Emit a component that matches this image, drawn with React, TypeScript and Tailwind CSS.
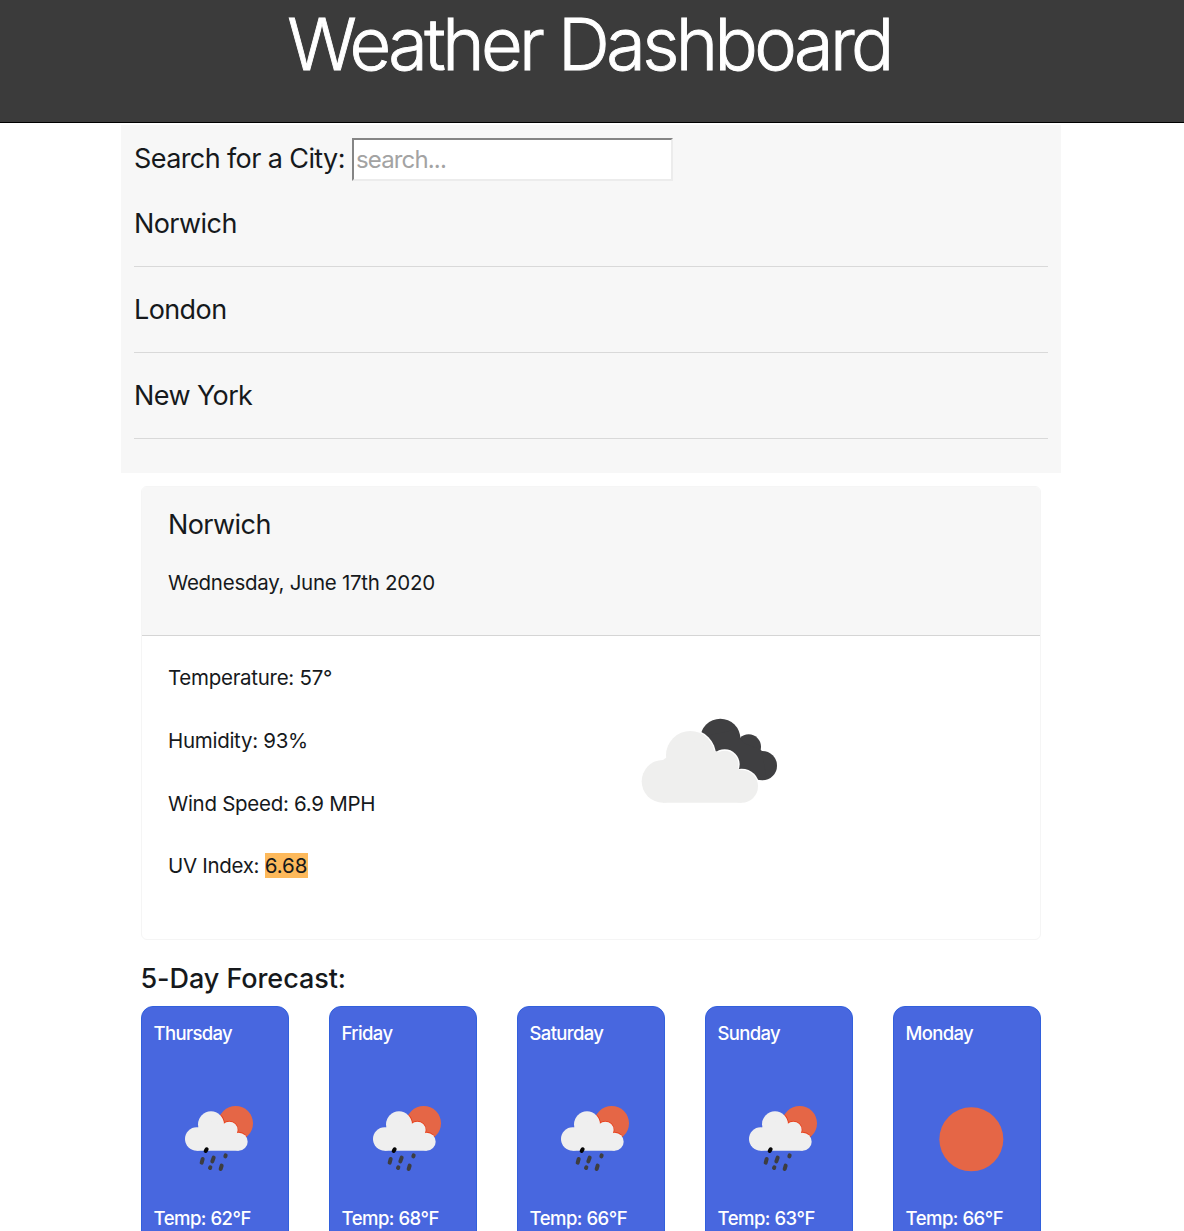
const cities = ["Norwich", "London", "New York"];

const days = [
  { name: "Thursday", temp: "62", rain: true },
  { name: "Friday", temp: "68", rain: true },
  { name: "Saturday", temp: "66", rain: true },
  { name: "Sunday", temp: "63", rain: true },
  { name: "Monday", temp: "66", rain: false },
];

function CloudsIcon() {
  return (
    <svg viewBox="0 0 540 360" className="h-[120px] w-[180px]">
      <g fill="#3f3f41">
        <circle cx="301" cy="116" r="60" />
        <circle cx="386" cy="140" r="37" />
        <circle cx="427" cy="197" r="44" />
        <path d="M250 110L340 90L359 113L372 130L424 150L440 235L410 240L300 200Z" />
      </g>
      <g fill="#fff">
        <circle cx="211" cy="166" r="77" />
        <circle cx="314" cy="193" r="45" />
        <circle cx="365" cy="259" r="53" />
      </g>
      <g fill="#efefee">
        <circle cx="129" cy="244" r="64" />
        <circle cx="211" cy="166" r="73" />
        <circle cx="314" cy="193" r="41" />
        <circle cx="365" cy="259" r="49" />
        <path d="M129 180L211 120L314 165L365 215V308H129Z" />
      </g>
    </svg>
  );
}

function CloudShape() {
  return (
    <>
      <circle cx="80" cy="132" r="35" />
      <circle cx="123" cy="88" r="39" />
      <circle cx="178" cy="105" r="25" />
      <circle cx="206" cy="140" r="27" />
      <path d="M80 100L123 80L178 95L206 120V167H80Z" />
    </>
  );
}

function RainIcon() {
  return (
    <svg viewBox="0 0 300 255" className="h-[85px] w-[100px]">
      <defs>
        <clipPath id="sunDisc">
          <circle cx="197" cy="85" r="52" />
        </clipPath>
      </defs>
      <circle cx="197" cy="85" r="52" fill="#e56646" />
      <g clipPath="url(#sunDisc)" fill="#e8401c" stroke="#e8401c" strokeWidth="5">
        <CloudShape />
      </g>
      <g fill="#efefef">
        <CloudShape />
      </g>
      <g stroke="#3d3d40" strokeWidth="12" strokeLinecap="round">
        <path d="M110 163L107 168" stroke="#050505" />
        <path d="M98 192L95 203M131 188L127 199M167 181L166 184M121 217L120 219M155 212L152 222" />
      </g>
    </svg>
  );
}

function SunIcon() {
  return (
    <svg viewBox="0 0 300 255" className="h-[85px] w-[100px]">
      <circle cx="148" cy="133" r="96" fill="#e56646" />
    </svg>
  );
}

export default function App() {
  return (
    <div className="h-[1231px] overflow-hidden bg-white font-['Inter',sans-serif] text-[#16191c]">
      <header className="flex h-[123px] justify-center border-b border-black bg-[#3b3b3b]">
        <h1 className="mt-[1px] mr-[6px] text-[72px] leading-[86px] font-light tracking-[-3.6px] whitespace-nowrap text-white [-webkit-text-stroke:0.9px_white]">
          <span>Weather Dashboard</span>
        </h1>
      </header>

      <section className="mt-[2px] ml-[121px] h-[348px] w-[940px] bg-[#f7f7f7] px-[13px] pt-[13px]">
        <div className="flex h-[43px] items-center">
          <label className="w-[218px] pb-[1px] text-[27px] tracking-[-0.6px] whitespace-nowrap">
            <span>Search for a City:</span>
          </label>
          <input
            placeholder="search..."
            className="h-[43px] w-[321px] rounded-none border-2 border-t-[#858585] border-r-[#ececec] border-b-[#ececec] border-l-[#858585] bg-white px-[2px] text-[24px] tracking-[-0.85px] outline-none placeholder:text-[#a3a3a3]"
          />
        </div>
        {cities.map((city) => (
          <div key={city} className="h-[86px] border-b border-[#d9d9d9] pt-[22px] text-[27px] leading-[42px] tracking-[-0.6px]">
            <span>{city}</span>
          </div>
        ))}
      </section>

      <section className="mt-[13px] ml-[141px] h-[454px] w-[900px] overflow-hidden rounded-[6px] border border-[#f5f5f5]">
        <div className="h-[149px] border-b border-[#d5d5d5] bg-[#f7f7f7] px-[26px] pt-[17px]">
          <h2 className="text-[27px] leading-[42px] tracking-[-0.6px]">
            <span>Norwich</span>
          </h2>
          <p className="mt-[21px] text-[20.5px] leading-8 tracking-[-0.27px]">
            <span>Wednesday, June 17th 2020</span>
          </p>
        </div>
        <div className="flex pt-[26px] pl-[26px]">
          <div className="flex w-[452px] flex-col gap-[30.8px] text-[20.5px] leading-8 tracking-[-0.28px]">
            <p><span>Temperature: 57°</span></p>
            <p><span>Humidity: 93%</span></p>
            <p><span>Wind Speed: 6.9 MPH</span></p>
            <p>
              <span className="tracking-[-0.3px]">UV Index: </span>
              <span className="bg-[#fdb95b] tracking-normal">6.68</span>
            </p>
          </div>
          <div className="mt-[38px]">
            <CloudsIcon />
          </div>
        </div>
      </section>

      <h2 className="mt-[18px] ml-[140.5px] h-[48px] text-[27px] leading-[42px] font-medium tracking-[-0.07px]">
        <span>5-Day Forecast:</span>
      </h2>
      <section className="ml-[140.5px] flex gap-[39.5px]">
        {days.map((day) => (
          <article
            key={day.name}
            className="h-[300px] w-[148.5px] shrink-0 rounded-[12px] border border-[#3260dc] bg-[#4867df] px-[12px] pt-[11px] text-[18.5px] leading-[30px] font-medium tracking-[-0.65px] text-white"
          >
            <h3><span>{day.name}</span></h3>
            <div className="mt-[47px] ml-[16.5px]">{day.rain ? <RainIcon /> : <SunIcon />}</div>
            <p className="mt-[23px] tracking-[-0.5px]"><span>Temp: {day.temp}°F</span></p>
          </article>
        ))}
      </section>
    </div>
  );
}
